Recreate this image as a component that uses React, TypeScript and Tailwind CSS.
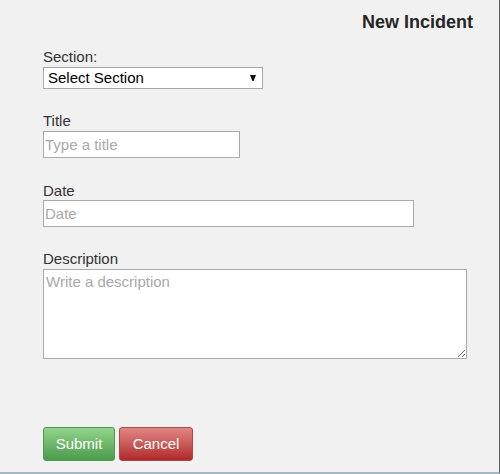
import { useState } from "react";

export default function App() {
  const [form, setForm] = useState({
    section: "",
    title: "",
    date: "",
    description: "",
  });

  const handleChange = (
    e: React.ChangeEvent<
      HTMLInputElement | HTMLSelectElement | HTMLTextAreaElement
    >
  ) => {
    setForm({ ...form, [e.target.name]: e.target.value });
  };

  return (
    <div className="w-[500px] h-[474px] bg-[#f1f1f1] border-r border-r-[#5f5f5f] border-b-2 border-b-[#a5b7c3] font-['Liberation_Sans',Arial,sans-serif] text-[#333]">
      {/* Header */}
      <h2 className="text-right pt-[12px] pr-[26px] text-[18px] leading-[20px] font-bold text-[#262626]">
        New Incident
      </h2>

      <form
        className="pl-[43px] pt-[16px] text-[15px]"
        onSubmit={(e) => e.preventDefault()}
      >
        {/* Section */}
        <div>
          <label className="block leading-[17px] mb-[2px]">Section:</label>
          <div className="relative w-[220px]">
            <select
              name="section"
              value={form.section}
              onChange={handleChange}
              className="block w-[220px] h-[22px] border border-[#a9a9a9] bg-white pl-[4px] text-black leading-[20px] appearance-none outline-none"
            >
              <option value="">Select Section</option>
              <option value="north">North</option>
              <option value="south">South</option>
            </select>
            <svg
              className="absolute right-[7px] top-[8px] pointer-events-none"
              width="6"
              height="7"
              viewBox="0 0 6 7"
            >
              <path d="M0 0 H6 L3.6 6 H2.4 Z" fill="#111" />
            </svg>
          </div>
        </div>

        {/* Title */}
        <div className="mt-[23px]">
          <label className="block leading-[17px] mb-[2px]">Title</label>
          <input
            type="text"
            name="title"
            value={form.title}
            onChange={handleChange}
            placeholder="Type a title"
            className="block w-[197px] h-[27px] border border-[#a9a9a9] bg-white px-[1px] text-black placeholder:text-[#a9a9a9] outline-none"
          />
        </div>

        {/* Date */}
        <div className="mt-[24px]">
          <label className="block leading-[17px] mb-[1px]">Date</label>
          <input
            type="text"
            name="date"
            value={form.date}
            onChange={handleChange}
            placeholder="Date"
            className="block w-[371px] h-[27px] border border-[#a9a9a9] bg-white px-[1px] text-black placeholder:text-[#a9a9a9] outline-none"
          />
        </div>

        {/* Description */}
        <div className="mt-[23px]">
          <label className="block leading-[17px] mb-[2px]">Description</label>
          <textarea
            name="description"
            value={form.description}
            onChange={handleChange}
            placeholder="Write a description"
            className="block w-[424px] h-[90px] border border-[#a9a9a9] bg-white px-[2px] pt-[3px] leading-[17px] text-black placeholder:text-[#a9a9a9] outline-none resize"
          />
        </div>

        {/* Buttons */}
        <div className="mt-[68px] flex gap-[4px]">
          <button
            type="submit"
            className="w-[72px] h-[34px] rounded-[3px] border border-[#4c9a4c] bg-gradient-to-b from-[#91d58c] to-[#4b9b4b] text-white text-[15px]"
          >
            Submit
          </button>
          <button
            type="button"
            className="w-[74px] h-[34px] rounded-[3px] border border-[#b04848] bg-gradient-to-b from-[#e08585] to-[#b02628] text-white text-[15px]"
          >
            Cancel
          </button>
        </div>
      </form>
    </div>
  );
}
